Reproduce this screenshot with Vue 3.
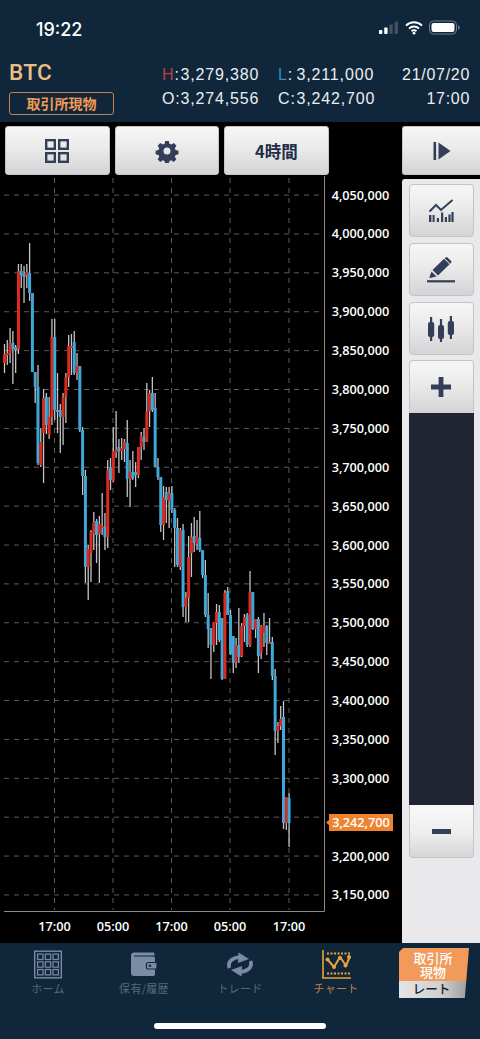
<script setup>
const raw = `344 373 354 363 r
340 365 353 355 r
328 363 343 353 r
331 384 343 349 b
345 373 347 350 b
264 354 271 349 r
264 288 271 275 b
266 303 274 277 b
264 288 272 275 r
243 301 273 293 b
293 372 293 372 b
372 403 372 387 b
365 465 387 463 b
428 467 442 465 r
389 483 398 433 r
393 434 397 425 b
397 439 417 435 r
319 425 337 417 r
319 420 337 410 b
373 433 410 412 b
404 453 410 417 b
393 445 397 417 r
373 423 377 397 r
335 387 346 377 r
334 375 346 347 r
331 375 342 373 b
353 380 366 373 r
366 432 366 430 b
427 495 430 476 b
470 583 476 567 b
545 600 549 567 r
530 582 532 553 r
512 550 522 534 r
519 563 521 535 b
516 583 524 534 r
493 535 526 527 r
513 550 527 537 b
460 548 470 537 r
458 490 467 480 b
427 482 451 481 r
411 458 450 451 r
439 473 447 451 b
438 460 448 451 r
439 462 442 449 r
420 497 443 479 b
460 507 472 479 r
451 480 472 478 b
462 487 472 475 b
447 478 447 475 r
432 460 436 447 r
428 450 437 442 b
383 442 412 442 r
390 427 393 411 r
377 412 393 410 b
393 467 408 467 b
458 480 467 477 b
478 532 477 525 b
486 540 497 525 r
487 523 492 500 b
487 528 493 501 r
486 513 493 510 b
508 567 510 528 b
518 567 528 565 b
528 570 530 567 r
524 617 530 607 b
592 622 598 607 r
536 622 557 598 r
523 577 537 553 r
517 552 536 543 b
520 550 537 544 r
511 552 538 550 b
550 578 550 575 b
560 617 575 615 b
593 648 615 629 b
628 679 628 645 b
622 652 622 645 r
604 645 612 623 r
605 642 612 640 b
618 680 618 679 b
590 679 593 679 r
587 615 591 615 b
610 655 615 654 b
636 673 636 663 b
638 668 645 662 r
608 663 645 657 b
623 657 626 656 r
614 642 617 626 r
613 647 615 645 b
571 647 592 645 r
592 630 592 629 b
619 638 619 629 r
617 673 619 656 b
625 659 626 653 r
613 647 626 633 r
625 655 626 643 b
618 643 642 643 r
637 680 642 676 b
669 755 676 731 b
722 743 726 731 r
706 730 719 726 r
701 829 717 823 b
797 830 797 823 r
793 847 798 823 b`
const candles = raw.split('\n').map((line, i) => {
  const [hi, lo, top, bot, kind] = line.trim().split(' ')
  return {
    x: 4.5 + 2.79 * i,
    hi: +hi - 176,
    lo: +lo - 176,
    top: +top - 176,
    h: Math.max(+bot - +top, 2),
    color: kind === 'r' ? '#d92b21' : '#3fa8d8'
  }
})
const prices = ['4,050,000','4,000,000','3,950,000','3,900,000','3,850,000','3,800,000','3,750,000','3,700,000','3,650,000','3,600,000','3,550,000','3,500,000','3,450,000','3,400,000','3,350,000','3,300,000','','3,200,000','3,150,000']
const axis = prices.map((label, i) => ({ label, y: 19.1 + 38.88 * i }))
const times = [
  { x: 54.5, label: '17:00' },
  { x: 113, label: '05:00' },
  { x: 171.5, label: '17:00' },
  { x: 230, label: '05:00' },
  { x: 289, label: '17:00' }
]
</script>

<template>
  <div class="app">
    <div class="status">
      <span class="clock">19:22</span>
      <svg class="status-icons" width="96" height="16" viewBox="0 0 96 16">
        <rect x="0" y="10" width="3.4" height="4" rx=".8" fill="#fff"/>
        <rect x="5.2" y="7.5" width="3.4" height="6.5" rx=".8" fill="#fff"/>
        <rect x="10.4" y="4.5" width="3.4" height="9.5" rx=".8" fill="#3d5363"/>
        <rect x="15.6" y="1.5" width="3.4" height="12.5" rx=".8" fill="#3d5363"/>
        <path d="M27 5.6a11.5 11.5 0 0 1 16 0M30 8.6a7.2 7.2 0 0 1 10 0M32.6 11.2a3.4 3.4 0 0 1 4.8 0" fill="none" stroke="#fff" stroke-width="2"/>
        <circle cx="35" cy="13.2" r="1.4" fill="#fff"/>
        <rect x="50.5" y="1" width="27" height="13" rx="4" fill="none" stroke="#6d7f8c" stroke-width="1"/>
        <rect x="52.5" y="3" width="23" height="9" rx="2.2" fill="#fff"/>
        <path d="M79 5.5c1.4.4 1.8 1.1 1.8 2s-.4 1.6-1.8 2z" fill="#6d7f8c"/>
      </svg>
    </div>

    <div class="quote">
      <div class="symbol">
        <div class="btc">BTC</div>
        <div class="tag">取引所現物</div>
      </div>
      <div class="ohlc">
        <div class="cell"><span class="label"><span class="hi">H</span>:</span>3,279,380</div>
        <div class="cell"><span class="label"><span class="lo">L</span>:</span>3,211,000</div>
        <div class="cell"><span class="label">O:</span>3,274,556</div>
        <div class="cell"><span class="label">C:</span>3,242,700</div>
      </div>
      <div class="when">
        <div>21/07/20</div>
        <div>17:00</div>
      </div>
    </div>

    <div class="main">
      <div class="chart-col">
        <div class="toolbar">
          <button class="btn">
            <svg width="24" height="24" viewBox="0 0 24 24" fill="none" stroke="#333f58" stroke-width="2.4">
              <rect x="1.2" y="1.2" width="8.6" height="8.6"/><rect x="14.2" y="1.2" width="8.6" height="8.6"/>
              <rect x="1.2" y="14.2" width="8.6" height="8.6"/><rect x="14.2" y="14.2" width="8.6" height="8.6"/>
            </svg>
          </button>
          <button class="btn">
            <svg width="24" height="24" viewBox="0 0 24 24">
              <path fill="#333f58" fill-rule="evenodd" d="M10 .8h4l.7 3.2 2 .9 2.9-1.7 2.9 2.9-1.8 2.8.9 2.1 3.2.7v4l-3.2.7-.9 2-.1 0 1.8 2.9-2.8 2.8-2.9-1.8-2 .9-.7 3.2h-4l-.7-3.2-2-.9-2.9 1.8-2.8-2.8 1.8-2.9-.9-2-3.2-.7v-4l3.2-.7.9-2.1-1.8-2.8 2.9-2.9 2.9 1.7 2-.9zM12 8.2a3.9 3.9 0 1 0 0 7.8 3.9 3.9 0 0 0 0-7.8z" transform="translate(1.2 1.2) scale(.9)"/>
            </svg>
          </button>
          <button class="btn period">4時間</button>
        </div>
        <svg class="chart" width="402" height="767" viewBox="0 0 402 767">
          <g stroke="#5c5c5c" stroke-width="1" stroke-dasharray="5 5">
            <line v-for="a in axis" :key="'h' + a.y" x1="4" :x2="323" :y1="a.y" :y2="a.y"/>
            <line v-for="t in times" :key="'v' + t.x + t.label" :x1="t.x" :x2="t.x" y1="2" y2="734"/>
          </g>
          <g v-for="(c, i) in candles" :key="i">
            <line :x1="c.x" :x2="c.x" :y1="c.hi" :y2="c.lo" stroke="#c4c4c4" stroke-width="1.3"/>
            <rect :x="c.x - 1.5" :y="c.top" width="3" :height="c.h" :fill="c.color"/>
          </g>
          <path d="M324.5 0V735.5H4" fill="none" stroke="#8a8a8a" stroke-width="1"/>
          <text v-for="a in axis" :key="a.y" class="price" x="360.5" :y="a.y + 4.5" text-anchor="middle">{{ a.label }}</text>
          <path d="M329 638H393V655H329V649L326 646.5L329 644z" fill="#ef8430"/>
          <text class="price" x="361" y="651.2" text-anchor="middle">3,242,700</text>
          <text v-for="t in times" :key="'t' + t.x" class="time" :x="t.x" y="755" text-anchor="middle">{{ t.label }}</text>
        </svg>
      </div>

      <div class="side">
        <button class="btn next">
          <svg width="18" height="20" viewBox="0 0 18 20">
            <rect x="0.5" y="1" width="2.6" height="18" fill="#333f58"/>
            <path d="M5.5 1.5 L17.5 10 L5.5 18.5z" fill="#333f58"/>
          </svg>
        </button>
        <div class="panel">
          <button class="btn tool">
            <svg width="26" height="24" viewBox="0 0 26 24">
              <path d="M1.5 12.5 8 6l5 5L24.5 1" fill="none" stroke="#333f58" stroke-width="2"/>
              <g fill="#333f58">
                <rect x="1" y="16" width="2.4" height="7"/><rect x="4.6" y="16" width="2" height="7"/>
                <rect x="8.8" y="19" width="2.2" height="4"/><rect x="13" y="13.5" width="2.2" height="9.5"/>
                <rect x="16.8" y="18" width="2.2" height="5"/><rect x="20.4" y="15.5" width="2.2" height="7.5"/><rect x="23.4" y="13" width="2.2" height="10"/>
              </g>
            </svg>
          </button>
          <button class="btn tool">
            <svg width="30" height="26" viewBox="0 0 30 26">
              <path d="M6.5 13 18 1.8l5.6 5.5L12 18.6z M19.5.6l1.500-.6 4.600 4.400-.6 1.700-.8.6-5.500-5.500z" fill="#333f58"/>
              <path d="M5.500 14.500 10.500 19.500 4 21l-.6-.6z" fill="#333f58"/>
              <rect x="1" y="23.2" width="28" height="2.2" fill="#333f58"/>
            </svg>
          </button>
          <button class="btn tool">
            <svg width="28" height="26" viewBox="0 0 28 26" fill="#333f58">
              <rect x="3" y="1" width="2.2" height="24"/><rect x="1" y="6" width="6.2" height="15" rx="2"/>
              <rect x="12.9" y="3" width="2.2" height="23"/><rect x="11" y="9" width="6" height="14" rx="2"/>
              <rect x="22.8" y="0" width="2.2" height="23"/><rect x="20.8" y="5" width="6.2" height="14" rx="2"/>
            </svg>
          </button>
          <div class="zoom">
            <button class="btn zoom-btn plus">
              <svg width="20" height="20" viewBox="0 0 20 20"><path d="M7.6 0h4.8v7.6H20v4.8h-7.6V20H7.6v-7.6H0V7.6h7.6z" fill="#333f58"/></svg>
            </button>
            <div class="zoom-track"></div>
            <button class="btn zoom-btn minus">
              <svg width="19" height="5" viewBox="0 0 19 5"><rect width="19" height="5" fill="#333f58"/></svg>
            </button>
          </div>
        </div>
      </div>
    </div>

    <nav class="nav">
      <div class="item">
        <svg width="28" height="28" viewBox="0 0 28 28" fill="none" stroke="#7b8ba3">
          <rect x=".7" y=".7" width="26.6" height="26.6" stroke-width="1.4"/>
          <g stroke-width="1.2">
            <rect x="3.6" y="3.6" width="5.4" height="5.4"/><rect x="11.3" y="3.6" width="5.4" height="5.4"/><rect x="19" y="3.6" width="5.4" height="5.4"/>
            <rect x="3.6" y="11.3" width="5.4" height="5.4"/><rect x="11.3" y="11.3" width="5.4" height="5.4"/><rect x="19" y="11.3" width="5.4" height="5.4"/>
            <rect x="3.6" y="19" width="5.4" height="5.4"/><rect x="11.3" y="19" width="5.4" height="5.4"/><rect x="19" y="19" width="5.4" height="5.4"/>
          </g>
        </svg>
        <span>ホーム</span>
      </div>
      <div class="item">
        <svg width="26" height="24" viewBox="0 0 26 24">
          <path d="M3 0h19c1 0 1.6.6 1.6 1.6V3H3.5C2.8 3 2.8 4 3.5 4H22c1.4 0 2 .8 2 2v3.5h-6.5c-1.6 0-2.7 1-2.7 2.7v2.2c0 1.6 1.1 2.7 2.7 2.7H24v4.3c0 1.4-.8 2-2 2H3c-1.8 0-3-1-3-3V3c0-1.8 1.2-3 3-3z" fill="#7b8ba3"/>
          <path d="M17.6 10.6H25.4V16H17.6C16.4 16 16 15.4 16 14.4V12.2C16 11.2 16.4 10.6 17.6 10.6z" fill="#7b8ba3"/>
          <circle cx="19" cy="13.3" r="1.2" fill="#10273b"/>
        </svg>
        <span>保有/履歴</span>
      </div>
      <div class="item">
        <svg width="28" height="24" viewBox="0 0 28 24">
          <g>
            <path d="M3.5 15.5C1 9 7.5 3.5 17 5" fill="none" stroke="#7b8ba3" stroke-width="3.6"/>
            <path d="M12.5 0 23 6.5 12 10.5z" fill="#7b8ba3"/>
          </g>
          <g transform="rotate(180 14 12)">
            <path d="M3.5 15.5C1 9 7.5 3.5 17 5" fill="none" stroke="#7b8ba3" stroke-width="3.6"/>
            <path d="M12.5 0 23 6.5 12 10.5z" fill="#7b8ba3"/>
          </g>
        </svg>
        <span>トレード</span>
      </div>
      <div class="item active">
        <svg width="29" height="29" viewBox="0 0 29 29" fill="none" stroke="#e9a437">
          <path d="M1 0V28H29" stroke-width="1.6"/>
          <path d="M5 3.5H28M5 23.5H28" stroke-width="1.8" stroke-dasharray="2 1.5"/>
          <path d="M5.5 9.5 12 17l6-10 6 8.5 4-9" stroke-width="2"/>
          <g fill="#e9a437" stroke="none"><circle cx="5.5" cy="9.5" r="2"/><circle cx="12" cy="17" r="2"/><circle cx="18" cy="8" r="2"/><circle cx="23.5" cy="15.5" r="2"/><circle cx="27" cy="7" r="2"/></g>
        </svg>
        <span>チャート</span>
      </div>
      <div class="badge">
        <div class="badge-top">取引所<br>現物</div>
        <div class="badge-bottom">レート</div>
      </div>
    </nav>
    <div class="home-wrap"><div class="home"></div></div>
  </div>
</template>

<style>
html, body { margin: 0; padding: 0; background: #10273b; }
</style>

<style scoped>
.app { width: 480px; height: 1039px; overflow: hidden; display: flex; flex-direction: column; background: #10273b; font-family: "Liberation Sans", "Noto Sans CJK JP", sans-serif; color: #e9eef2; }
button { font-family: inherit; padding: 0; margin: 0; }

.status { height: 56px; flex: none; display: flex; align-items: center; justify-content: space-between; padding: 0 0 0 36px; box-sizing: border-box; }
.clock { font: 500 18px Inter, sans-serif; color: #fff; position: relative; top: 1px; }
.status-icons { margin-left: auto; position: relative; left: -1px; padding-right: 4px; }

.quote { height: 66px; flex: none; display: flex; box-sizing: border-box; padding: 5px 10px 0 9px; }
.symbol { width: 153px; flex: none; }
.btc { font: 500 22.5px/22px Roboto, sans-serif; color: #eebd83; letter-spacing: .4px; }
.tag { width: 105px; height: 23px; margin-top: 9px; box-sizing: border-box; border: 1px solid #c87e45; border-radius: 3px; color: #f09a56; font: 700 14px/21px "Noto Sans CJK JP", sans-serif; text-align: center; }
.ohlc { width: 232px; flex: none; display: grid; grid-template-columns: 116px 116px; grid-auto-rows: 24px; font-size: 16px; line-height: 24px; letter-spacing: .85px; padding-top: 2px; }
.cell { white-space: nowrap; }
.label { display: inline-block; width: 18.5px; }
.hi { color: #b9403f; }
.lo { color: #2f8dc1; }
.when { flex: 1; text-align: right; font-size: 16px; line-height: 24px; letter-spacing: .7px; padding-top: 2px; }

.main { height: 821px; flex: none; display: flex; background: #000; }
.chart-col { width: 402px; flex: none; display: flex; flex-direction: column; }
.toolbar { display: flex; gap: 5px; padding: 4px 0 0 5px; height: 54px; box-sizing: border-box; flex: none; }
.btn { display: flex; align-items: center; justify-content: center; box-sizing: border-box; border: 1px solid #c6c6c8; border-radius: 3px; background: linear-gradient(#f6f6f6, #ececec 40%, #d4d4d6); color: #26304a; }
.toolbar .btn { width: 104.6px; height: 49px; }
.period { font: 700 16.5px "Noto Sans CJK JP", sans-serif; color: #222c44; }
.chart { display: block; flex: none; }
.price { font: 600 12.7px "Open Sans", sans-serif; fill: #fff; }
.time { font: 600 12.7px "Open Sans", sans-serif; fill: #fff; }

.side { width: 78px; flex: none; display: flex; flex-direction: column; }
.next { height: 49px; margin-top: 4px; border-radius: 3px 0 0 3px; border-right: 0; flex: none; }
.panel { flex: 1; margin-top: 4px; background: #e9e9eb; border-radius: 3px 0 0 0; padding: 5px 6px 0 6.5px; box-sizing: border-box; display: flex; flex-direction: column; gap: 6px; }
.tool { height: 53px; width: 65px; border-color: #c4c4c6; border-radius: 4px; flex: none; }
.zoom { display: flex; flex-direction: column; width: 65px; flex: none; margin-top: -1px; }
.zoom-btn { width: 65px; height: 53px; flex: none; border-color: #c4c4c6; }
.plus { border-radius: 4px 4px 0 0; border-bottom: 0; }
.minus { border-radius: 0 0 4px 4px; border-top: 0; background: linear-gradient(#f9f9f9, #efefef 50%, #d6d6d8); }
.zoom-track { height: 392px; background: #1f2533; }

.nav { height: 56px; flex: none; display: flex; padding: 7px 0 0 0; box-sizing: border-box; position: relative; }
.item { width: 96px; flex: none; display: flex; flex-direction: column; align-items: center; font: 400 11px/14px "Noto Sans CJK JP", sans-serif; color: #56697c; height: 46px; }
.item svg { height: 29px; flex: none; }
.item span { margin-top: 1.5px; letter-spacing: .3px; }
.item.active { color: #c47f43; }
.badge { position: absolute; left: 399px; top: 5px; width: 70px; height: 50px; clip-path: polygon(4px 0, 100% 0, 94% 100%, 0 100%, 0 4px); border-radius: 0 0 5px 0; }
.badge-top { height: 33px; background: #f19a5a; color: #fff; text-align: center; font: 500 13px/14px "Noto Sans CJK JP", sans-serif; padding: 3px 2px 0 0; box-sizing: border-box; white-space: nowrap; }
.badge-bottom { height: 17px; background: linear-gradient(90deg, #e5e5e5, #d0d0d0 60%, #9b9b9b); color: #1b2436; text-align: center; font: 500 12.5px/16px "Noto Sans CJK JP", sans-serif; padding-right: 5px; }

.home-wrap { flex: 1; display: flex; justify-content: center; align-items: flex-start; padding-top: 24px; }
.home { width: 172px; height: 6px; border-radius: 3px; background: #fff; }
</style>
